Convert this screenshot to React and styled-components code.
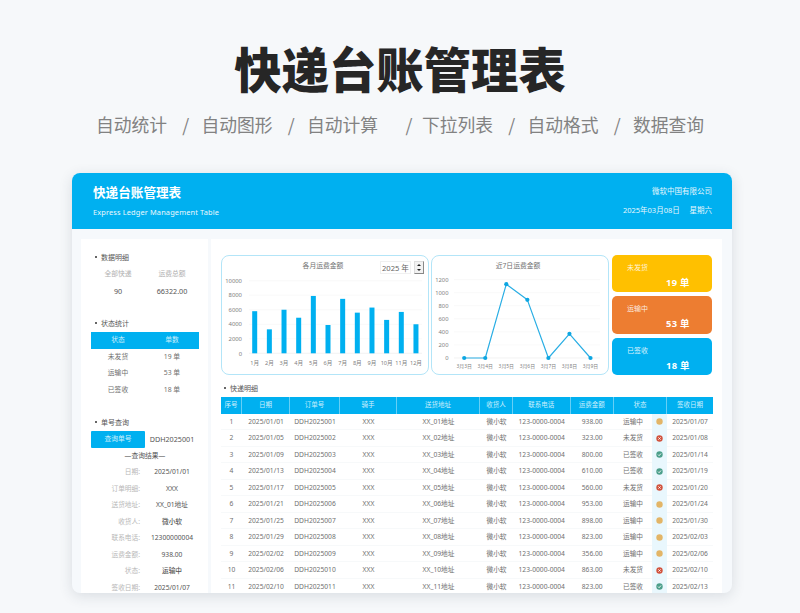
import React from 'react'
import styled, { createGlobalStyle } from 'styled-components'

const GlobalStyle = createGlobalStyle`
  html, body {
    margin: 0;
    padding: 0;
    background: #f6f8fa;
    font-family: "Noto Sans", "Noto Sans CJK SC", sans-serif;
  }
`;

const BLUE = '#00b0f0';

const Page = styled.div`
  width: 800px;
  height: 613px;
  overflow: hidden;
  display: flex;
  flex-direction: column;
  align-items: center;
`;

const BigTitle = styled.h1`
  margin: 34px 0 0;
  height: 68px;
  line-height: 68px;
  font-size: 47.4px;
  font-weight: 900;
  color: #262626;
  font-family: "Noto Sans CJK SC", sans-serif;
`;

const Features = styled.div`
  margin-top: 9px;
  height: 26px;
  display: flex;
  align-items: center;
  font-size: 17.8px;
  color: #828282;
  font-family: "Noto Sans CJK SC", sans-serif;
`;

const Feature = styled.span`
  width: 71px;
  white-space: nowrap;
`;

const Slash = styled.span`
  width: ${p => (p.$wide ? 44 : 34.5)}px;
  padding-left: ${p => (p.$wide ? 18 : 3)}px;
  box-sizing: border-box;
  text-align: center;
`;

const Card = styled.div`
  margin: 36px 0 0 72px;
  align-self: flex-start;
  width: 660px;
  height: 420px;
  border-radius: 8px;
  overflow: hidden;
  background: #f6f9fc;
  box-shadow: 0 3px 14px rgba(40, 60, 80, 0.14);
  display: flex;
  flex-direction: column;
`;

const Banner = styled.header`
  height: 56px;
  flex: none;
  background: ${BLUE};
  color: #fff;
  padding: 0 20px 0 21px;
  display: flex;
  justify-content: space-between;
  align-items: center;
`;

const BannerSide = styled.div`
  display: flex;
  flex-direction: column;
  gap: ${p => (p.$right ? 6 : 5)}px;
  align-items: ${p => (p.$right ? 'flex-end' : 'flex-start')};
`;

const BannerTitle = styled.div`
  font-size: 12.6px;
  font-weight: 700;
  line-height: 17px;
  white-space: nowrap;
`;

const BannerSub = styled.div`
  font-size: 7.4px;
  line-height: 12px;
  letter-spacing: 0.14px;
  white-space: nowrap;
  opacity: 0.92;
`;

const BannerNote = styled.div`
  font-size: 7.5px;
  line-height: 13px;
  white-space: pre;
  opacity: 0.9;
`;

const Body = styled.div`
  flex: 1;
  min-height: 0;
  display: flex;
  gap: 3px;
  padding: 10px 10px 0 9px;
`;

const Sidebar = styled.aside`
  width: 127px;
  flex: none;
  background: #fff;
  padding: 10.7px 9px 0 10px;
  box-sizing: border-box;
`;

const Main = styled.main`
  flex: 1;
  background: #fff;
  padding: 16px 9px 0 10px;
  overflow: hidden;
`;

const Heading = styled.div`
  height: 16.5px;
  line-height: 16.5px;
  font-size: 7px;
  color: #555;
  padding-left: ${p => (p.$flush ? 3 : 4)}px;
  margin-top: ${p => (p.$gap ? 16.5 : 0)}px;
  &::before {
    content: '';
    display: inline-block;
    width: 2px;
    height: 2px;
    border-radius: 50%;
    background: #333;
    margin: 0 4px 2px 0;
    vertical-align: middle;
  }
`;

const Pair = styled.div`
  display: grid;
  grid-template-columns: 54px 54px;
  height: 16.5px;
  line-height: 16.5px;
  text-align: center;
  font-size: ${p => (p.$num ? 7.2 : 6.8)}px;
  color: ${p => (p.$num ? '#555' : p.$muted ? '#b0b0b0' : '#707070')};
`;

const PairHead = styled(Pair)`
  background: ${BLUE};
  color: #cdeffc;
`;

const QueryRow = styled.div`
  display: grid;
  grid-template-columns: 54px 54px;
  height: 16.5px;
  line-height: 16.5px;
  text-align: center;
`;

const QueryBtn = styled.div`
  background: ${BLUE};
  color: #cdeffc;
  font-size: 6.8px;
  border-radius: 1px;
`;

const QueryValue = styled.div`
  font-size: 7.2px;
  color: #555;
  white-space: nowrap;
`;

const ResultTitle = styled.div`
  height: 16.5px;
  line-height: 16.5px;
  text-align: center;
  font-size: 6.8px;
  color: #555;
`;

const ResultRow = styled.div`
  display: grid;
  grid-template-columns: 49px 54px;
  column-gap: 5px;
  height: 16.5px;
  line-height: 16.5px;
  font-size: 6.7px;
  white-space: nowrap;
`;

const ResultLabel = styled.span`
  text-align: right;
  color: #b8b8b8;
`;

const ResultValue = styled.span`
  text-align: center;
  color: #555;
  font-weight: ${p => (p.$strong ? 500 : 400)};
`;

const TopRow = styled.div`
  display: flex;
  height: 120px;
  gap: 2px;
`;

const ChartPanel = styled.section`
  width: ${p => p.$w}px;
  flex: none;
  box-sizing: border-box;
  border: 1.5px solid #b3e5f8;
  border-radius: 8px;
  overflow: hidden;
  background: #fff;
`;

const ChartHead = styled.div`
  height: 22.5px;
  display: grid;
  grid-template-columns: 1fr auto 1fr;
  align-items: center;
  padding-right: 4px;
`;

const ChartTitle = styled.div`
  grid-column: 2;
  font-size: 6.8px;
  line-height: 20px;
  margin-bottom: 2px;
  color: #707070;
  white-space: nowrap;
`;

const YearPicker = styled.div`
  justify-self: end;
  display: flex;
  align-items: center;
  gap: 3px;
`;

const YearBox = styled.div`
  width: 31px;
  height: 13px;
  line-height: 12px;
  box-sizing: border-box;
  border: 1px solid #f0f0f0;
  font-size: 7.6px;
  color: #666;
  text-align: center;
  white-space: nowrap;
`;

const Spinner = styled.div`
  width: 10px;
  height: 13px;
  box-sizing: border-box;
  border-right: 1px solid #888;
  border-bottom: 1px solid #888;
  border-top: 1px solid #ddd;
  border-left: 1px solid #ddd;
  background: #f2f2f2;
  display: flex;
  flex-direction: column;
  align-items: center;
  justify-content: space-around;
`;

const Arrow = styled.span`
  width: 0;
  height: 0;
  border-left: 2px solid transparent;
  border-right: 2px solid transparent;
  border-${p => (p.$down ? 'top' : 'bottom')}: 2.5px solid #222;
`;

const ChartSvg = styled.svg`
  display: block;
  overflow: visible;
  font-family: "Noto Sans", "Noto Sans CJK SC", sans-serif;
`;

const StatusCards = styled.div`
  margin-left: 1px;
  width: 100px;
  display: flex;
  flex-direction: column;
  gap: 4px;
`;

const StatusCard = styled.div`
  flex: 1;
  border-radius: 5px;
  background: ${p => p.$bg};
  color: #fff;
  padding: 7px 0 0 15px;
  box-sizing: border-box;
`;

const StatusName = styled.div`
  font-size: 7px;
  line-height: 12px;
  color: rgba(255, 255, 255, 0.85);
`;

const StatusCount = styled.div`
  font-size: 9.4px;
  font-weight: 700;
  line-height: 15px;
  margin-top: 1px;
  padding-left: 39px;
  letter-spacing: 0.3px;
`;

const TableHeading = styled(Heading)`
  margin-top: 6px;
  height: 16px;
  line-height: 16px;
`;

const COLS = '21px 48px 50px 57px 83px 33px 57.5px 43.5px 38px 15px 46px';

const HeadRow = styled.div`
  display: grid;
  grid-template-columns: 21px 48px 50px 57px 83px 33px 57.5px 43.5px 53px 46px;
  height: 16.5px;
  background: ${BLUE};
`;

const HeadCell = styled.div`
  line-height: 16.5px;
  text-align: center;
  font-size: 6.5px;
  color: #cdeffc;
  border-right: 1px solid rgba(255, 255, 255, 0.4);
  &:last-child {
    border-right: 0;
  }
`;

const DataRow = styled.div`
  display: grid;
  grid-template-columns: ${COLS};
  height: 16.5px;
  box-shadow: inset 0 -1px 0 #f7f9fa;
`;

const Cell = styled.div`
  line-height: 16.5px;
  text-align: center;
  font-size: 6.7px;
  color: #707070;
  white-space: nowrap;
`;

const IconCell = styled.div`
  background: #e9f7fd;
  display: flex;
  align-items: center;
  justify-content: center;
`;

const barValues = [5800, 3300, 6000, 4900, 7900, 3900, 7500, 5600, 6300, 4600, 5700, 4000];
const lineValues = [0, 0, 1130, 890, 0, 370, 0];
const lineDays = ['3月3日', '3月4日', '3月5日', '3月6日', '3月7日', '3月8日', '3月9日'];

function BarChart() {
  const zero = 74.3;
  const scale = 72.6 / 10000;
  return (
    <ChartSvg width="205" height="95" viewBox="0 0 205 95">
      {[0, 2000, 4000, 6000, 8000, 10000].map(v => (
        <g key={v}>
          <line x1="27" x2="200" y1={zero - v * scale} y2={zero - v * scale} stroke={v ? '#f7f7f7' : '#ececec'} strokeWidth="0.7" />
          <text x="20" y={zero - v * scale + 2.2} textAnchor="end" fontSize="5.9" fill="#808080">{v}</text>
        </g>
      ))}
      {barValues.map((v, i) => {
        const x = 32.7 + i * 14.66;
        return (
          <g key={i}>
            <rect x={x - 2.5} y={zero - v * scale} width="5" height={v * scale} fill={BLUE} />
            <text x={x} y="85.8" textAnchor="middle" fontSize="5.6" fill="#808080">{i + 1}月</text>
          </g>
        );
      })}
    </ChartSvg>
  );
}

function LineChart() {
  const zero = 79;
  const scale = 78.4 / 1200;
  const pts = lineValues.map((v, i) => [32.2 + i * 21.05, zero - v * scale]);
  return (
    <ChartSvg width="175" height="95" viewBox="0 0 175 95">
      {[0, 200, 400, 600, 800, 1000, 1200].map(v => (
        <g key={v}>
          <line x1="22" x2="168" y1={zero - v * scale} y2={zero - v * scale} stroke={v ? '#f7f7f7' : '#ececec'} strokeWidth="0.7" />
          <text x="16.5" y={zero - v * scale + 2.1} textAnchor="end" fontSize="5.8" fill="#808080">{v}</text>
        </g>
      ))}
      <polyline points={pts.map(p => p.join(',')).join(' ')} fill="none" stroke="#2aaee4" strokeWidth="1.2" strokeLinejoin="round" />
      {pts.map((p, i) => (
        <g key={i}>
          <circle cx={p[0]} cy={p[1]} r="2.1" fill="#0ca6e2" />
          <text x={p[0]} y="88.8" textAnchor="middle" fontSize="4.9" fill="#808080">{lineDays[i]}</text>
        </g>
      ))}
    </ChartSvg>
  );
}

// excel style icon set: dot, cross, tick
function StatusIcon({ status }) {
  if (status === '运输中') {
    return (
      <svg width="7" height="7" viewBox="0 0 7 7">
        <circle cx="3.5" cy="3.5" r="3.2" fill="#e3b567" />
      </svg>
    );
  }
  if (status === '未发货') {
    return (
      <svg width="7" height="7" viewBox="0 0 7 7">
        <circle cx="3.5" cy="3.5" r="3.2" fill="#d2533e" />
        <path d="M2.4 2.4 L4.6 4.6 M4.6 2.4 L2.4 4.6" stroke="#fff" strokeWidth="0.9" />
      </svg>
    );
  }
  return (
    <svg width="7" height="7" viewBox="0 0 7 7">
      <circle cx="3.5" cy="3.5" r="3.2" fill="#4c9f8b" />
      <path d="M2 3.6 L3.1 4.7 L5 2.5" stroke="#fff" strokeWidth="0.9" fill="none" />
    </svg>
  );
}

const rows = [
  ['2025/01/01', '938.00', '运输中', '2025/01/07'],
  ['2025/01/05', '323.00', '未发货', '2025/01/08'],
  ['2025/01/09', '800.00', '已签收', '2025/01/14'],
  ['2025/01/13', '610.00', '已签收', '2025/01/19'],
  ['2025/01/17', '560.00', '未发货', '2025/01/20'],
  ['2025/01/21', '953.00', '运输中', '2025/01/24'],
  ['2025/01/25', '898.00', '运输中', '2025/01/30'],
  ['2025/01/29', '823.00', '运输中', '2025/02/03'],
  ['2025/02/02', '356.00', '运输中', '2025/02/06'],
  ['2025/02/06', '863.00', '未发货', '2025/02/10'],
  ['2025/02/10', '823.00', '已签收', '2025/02/13'],
];

const headers = ['序号', '日期', '订单号', '骑手', '送货地址', '收货人', '联系电话', '运费金额', '状态', '签收日期'];

const result = [
  ['日期:', '2025/01/01'],
  ['订单明细:', 'XXX'],
  ['送货地址:', 'XX_01地址'],
  ['收货人:', '微小软', true],
  ['联系电话:', '12300000004'],
  ['运费金额:', '938.00'],
  ['状态:', '运输中', true],
  ['签收日期:', '2025/01/07'],
];

export default function App() {
  const pad = n => String(n).padStart(2, '0');
  return (
    <Page>
      <GlobalStyle />
      <BigTitle>快递台账管理表</BigTitle>
      <Features>
        <Feature>自动统计</Feature>
        <Slash>/</Slash>
        <Feature>自动图形</Feature>
        <Slash>/</Slash>
        <Feature>自动计算</Feature>
        <Slash $wide>/</Slash>
        <Feature>下拉列表</Feature>
        <Slash>/</Slash>
        <Feature>自动格式</Feature>
        <Slash>/</Slash>
        <Feature>数据查询</Feature>
      </Features>

      <Card>
        <Banner>
          <BannerSide>
            <BannerTitle>快递台账管理表</BannerTitle>
            <BannerSub>Express Ledger Management Table</BannerSub>
          </BannerSide>
          <BannerSide $right>
            <BannerNote>微软中国有限公司</BannerNote>
            <BannerNote>{'2025年03月08日     星期六'}</BannerNote>
          </BannerSide>
        </Banner>

        <Body>
          <Sidebar>
            <Heading>数据明细</Heading>
            <Pair $muted><span>全部快递</span><span>运费总额</span></Pair>
            <Pair $num><span>90</span><span>66322.00</span></Pair>

            <Heading $gap>状态统计</Heading>
            <PairHead><span>状态</span><span>单数</span></PairHead>
            <Pair><span>未发货</span><span>19 单</span></Pair>
            <Pair><span>运输中</span><span>53 单</span></Pair>
            <Pair><span>已签收</span><span>18 单</span></Pair>

            <Heading $gap>单号查询</Heading>
            <QueryRow>
              <QueryBtn>查询单号</QueryBtn>
              <QueryValue>DDH2025001</QueryValue>
            </QueryRow>
            <ResultTitle>—查询结果—</ResultTitle>
            {result.map(([label, value, strong]) => (
              <ResultRow key={label}>
                <ResultLabel>{label}</ResultLabel>
                <ResultValue $strong={strong}>{value}</ResultValue>
              </ResultRow>
            ))}
          </Sidebar>

          <Main>
            <TopRow>
              <ChartPanel $w={208}>
                <ChartHead>
                  <ChartTitle>各月运费金额</ChartTitle>
                  <YearPicker>
                    <YearBox>2025 年</YearBox>
                    <Spinner><Arrow /><Arrow $down /></Spinner>
                  </YearPicker>
                </ChartHead>
                <BarChart />
              </ChartPanel>
              <ChartPanel $w={178}>
                <ChartHead>
                  <ChartTitle>近7日运费金额</ChartTitle>
                </ChartHead>
                <LineChart />
              </ChartPanel>
              <StatusCards>
                <StatusCard $bg="#ffc000">
                  <StatusName>未发货</StatusName>
                  <StatusCount>19 单</StatusCount>
                </StatusCard>
                <StatusCard $bg="#ed7d31">
                  <StatusName>运输中</StatusName>
                  <StatusCount>53 单</StatusCount>
                </StatusCard>
                <StatusCard $bg={BLUE}>
                  <StatusName>已签收</StatusName>
                  <StatusCount>18 单</StatusCount>
                </StatusCard>
              </StatusCards>
            </TopRow>

            <TableHeading $flush>快递明细</TableHeading>
            <HeadRow>
              {headers.map(h => <HeadCell key={h}>{h}</HeadCell>)}
            </HeadRow>
            {rows.map((r, i) => (
              <DataRow key={i}>
                <Cell>{i + 1}</Cell>
                <Cell>{r[0]}</Cell>
                <Cell>DDH20250{pad(i + 1)}</Cell>
                <Cell>XXX</Cell>
                <Cell>XX_{pad(i + 1)}地址</Cell>
                <Cell>微小软</Cell>
                <Cell>123-0000-0004</Cell>
                <Cell>{r[1]}</Cell>
                <Cell>{r[2]}</Cell>
                <IconCell><StatusIcon status={r[2]} /></IconCell>
                <Cell>{r[3]}</Cell>
              </DataRow>
            ))}
          </Main>
        </Body>
      </Card>
    </Page>
  );
}
